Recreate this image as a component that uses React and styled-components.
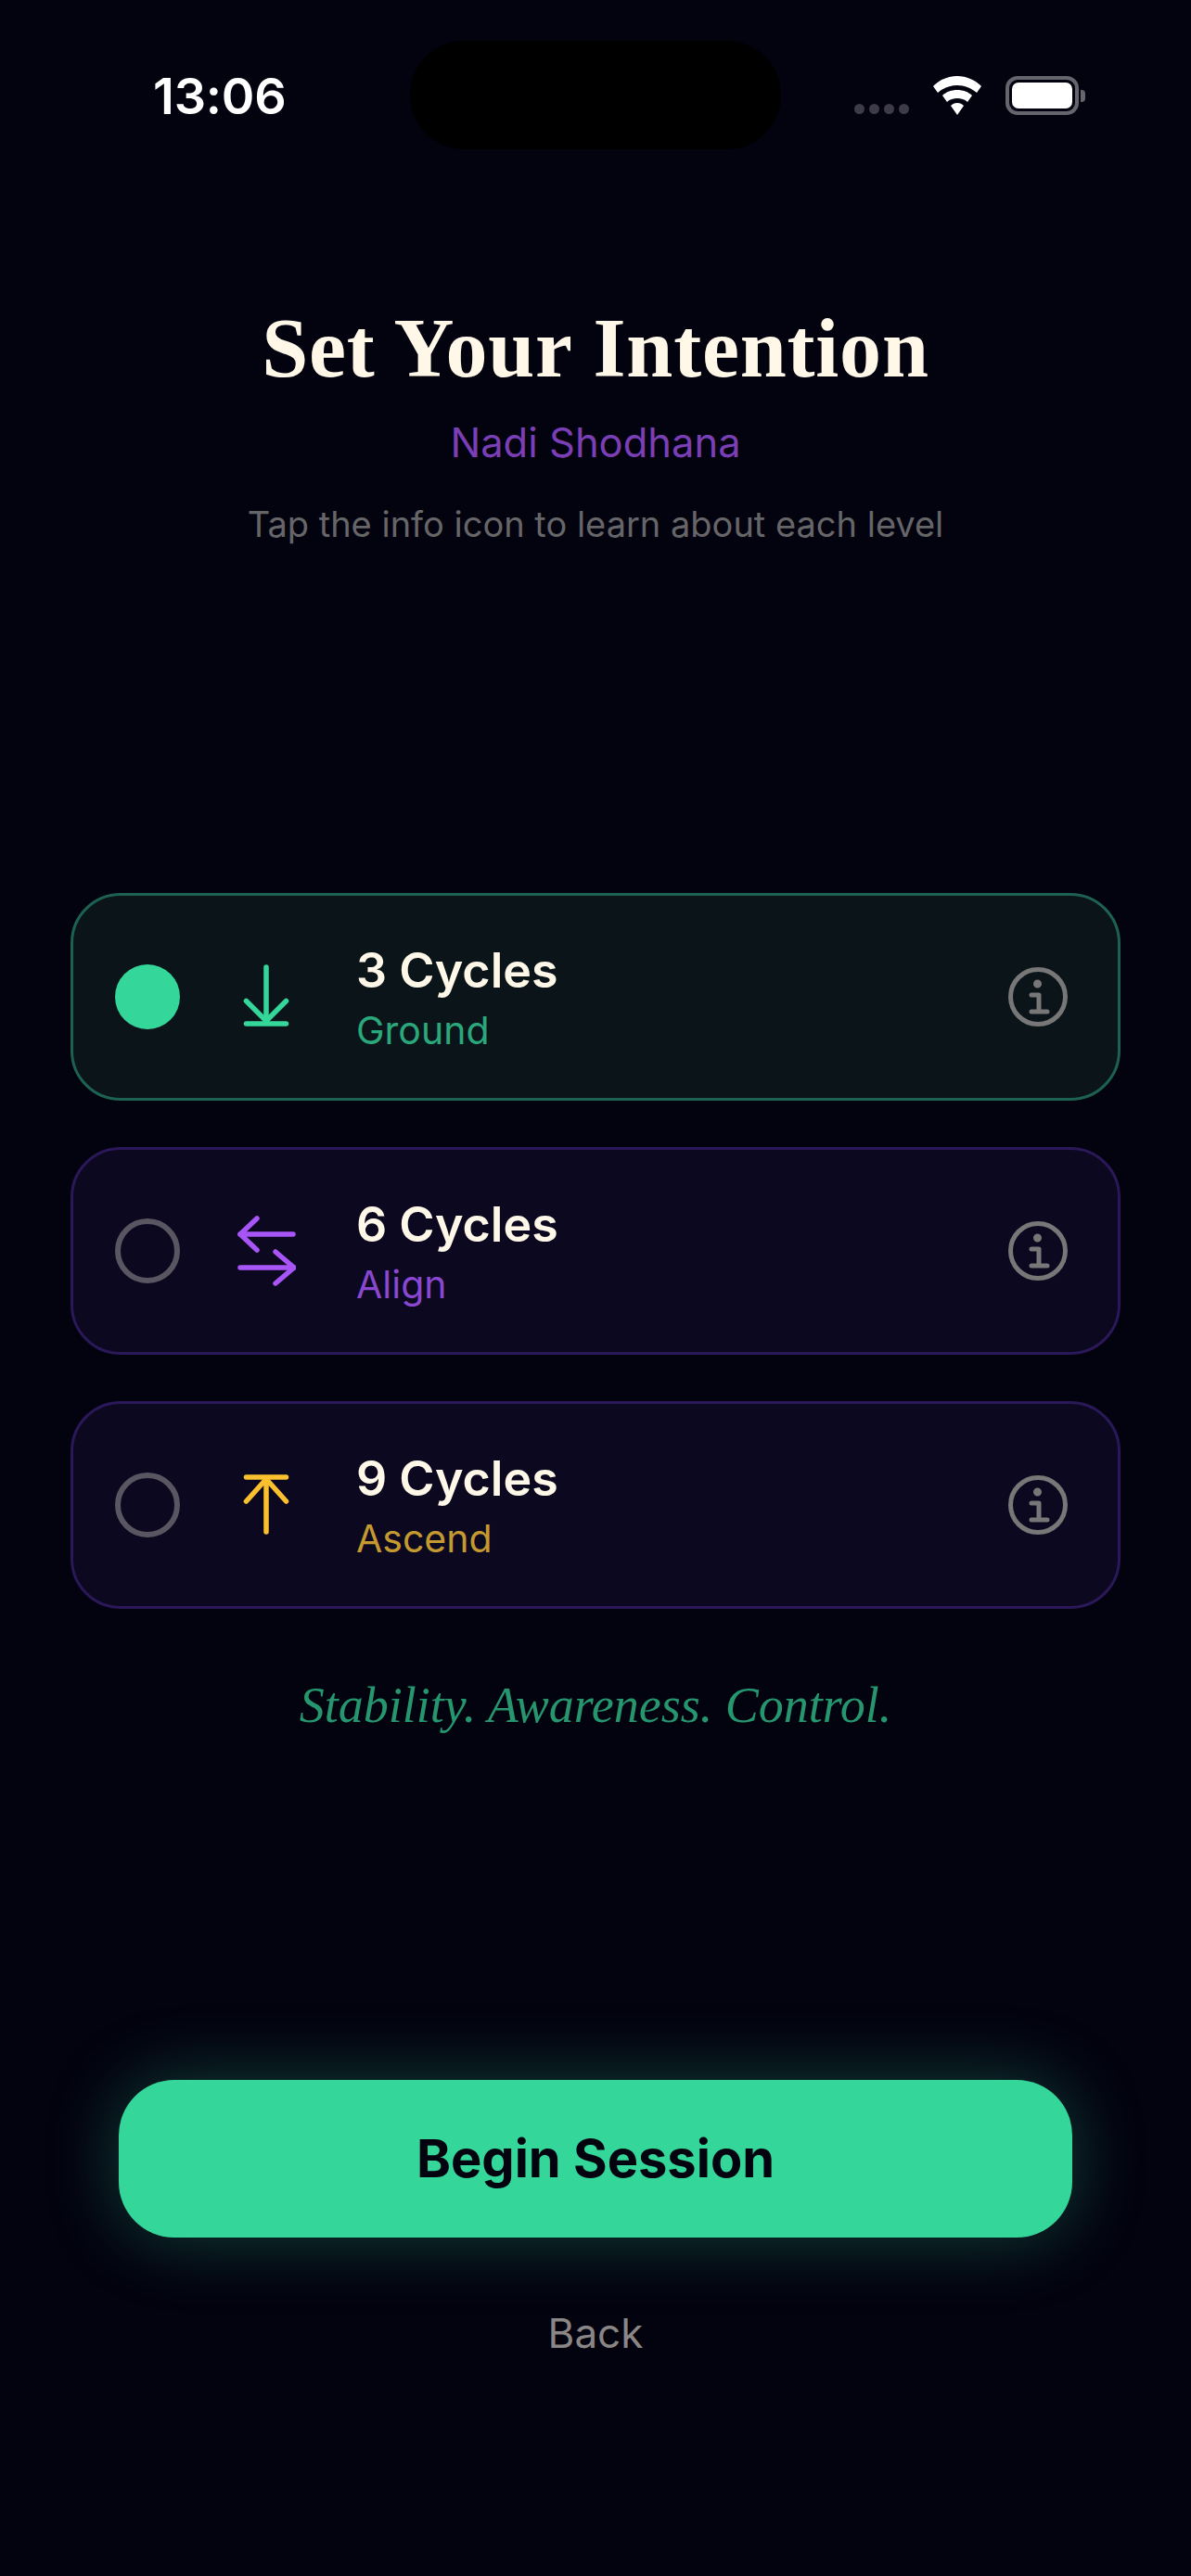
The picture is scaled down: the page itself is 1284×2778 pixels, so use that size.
import React from "react";
import styled, { createGlobalStyle } from "styled-components";

const GlobalStyle = createGlobalStyle`
  html, body {
    margin: 0;
    padding: 0;
    background: #03020f;
  }
  * {
    box-sizing: border-box;
  }
`;

const Page = styled.div`
  width: 1284px;
  height: 2778px;
  overflow: hidden;
  background: #03020f;
  font-family: Inter, "Liberation Sans", sans-serif;
  display: flex;
  flex-direction: column;
`;

const StatusBar = styled.div`
  display: grid;
  grid-template-columns: 442px 400px 442px;
  height: 117px;
  margin-top: 44px;
`;

const Time = styled.div`
  padding: 33px 0 0 165px;
  font-size: 54px;
  line-height: 54px;
  font-weight: 600;
  letter-spacing: -0.2px;
  color: #ffffff;
`;

const Island = styled.div`
  background: #000000;
  border-radius: 58px;
`;

const StatusIcons = styled.div`
  display: flex;
  align-items: flex-start;
  padding: 38px 0 0 79px;
`;

const Dots = styled.div`
  display: flex;
  gap: 5px;
  margin: 30px 25px 0 0;
`;

const Dot = styled.span`
  width: 11px;
  height: 11px;
  border-radius: 50%;
  background: #3c3b47;
`;

const Battery = styled.div`
  display: flex;
  align-items: center;
  margin-left: 25px;
`;

const BatteryBody = styled.div`
  width: 79px;
  height: 42px;
  border: 4px solid #66656e;
  border-radius: 13px;
  padding: 3px;
`;

const BatteryFill = styled.div`
  height: 100%;
  background: #ffffff;
  border-radius: 7px;
`;

const BatteryNub = styled.div`
  width: 5px;
  height: 13px;
  margin-left: 2px;
  border-radius: 0 4px 4px 0;
  background: #66656e;
`;

const Header = styled.div`
  display: flex;
  flex-direction: column;
  align-items: center;
  margin-top: 170px;
`;

const Title = styled.h1`
  margin: 0;
  font-family: "Liberation Serif", serif;
  font-size: 90px;
  line-height: 90px;
  font-weight: 700;
  letter-spacing: 0.8px;
  color: #fff8e8;
`;

const Subtitle = styled.div`
  margin-top: 31px;
  font-size: 43.5px;
  line-height: 50px;
  color: #7b3fb5;
`;

const Hint = styled.div`
  margin-top: 40px;
  font-size: 38px;
  line-height: 46px;
  color: #666568;
`;

const CardList = styled.div`
  display: flex;
  flex-direction: column;
  gap: 50px;
  margin: 375px 76px 0 76px;
`;

const Card = styled.div`
  display: flex;
  align-items: center;
  height: 224px;
  padding: 0 54px 0 45px;
  border: 3px solid ${(p) => (p.$active ? "#1d6152" : "#2b1858")};
  border-radius: 54px;
  background: ${(p) => (p.$active ? "#0a1419" : "#0b0820")};
`;

const Radio = styled.div`
  width: 70px;
  height: 70px;
  flex: none;
  margin-right: 61px;
  border-radius: 50%;
  background: ${(p) => (p.$active ? "#35d69a" : "transparent")};
  border: ${(p) => (p.$active ? "none" : "6px solid #5a5661")};
`;

const LevelIcon = styled.svg`
  width: 64px;
  height: 80px;
  flex: none;
  margin-right: 65px;
  fill: none;
  stroke: ${(p) => p.$color};
  stroke-width: 5.5;
  stroke-linecap: round;
  stroke-linejoin: round;
`;

const CardText = styled.div`
  flex: 1;
  display: flex;
  flex-direction: column;
  padding-top: 2px;
`;

const CardTitle = styled.div`
  font-size: 52px;
  line-height: 60px;
  font-weight: 600;
  color: #fff8e8;
`;

const CardLabel = styled.div`
  margin-top: 10px;
  font-size: 41px;
  line-height: 48px;
  color: ${(p) => p.$color};
`;

const InfoIcon = styled.svg`
  width: 64px;
  height: 64px;
  flex: none;
  fill: none;
  stroke: #777777;
  stroke-width: 5;
  stroke-linecap: round;
  stroke-linejoin: round;
`;

const Quote = styled.div`
  margin-top: 74px;
  text-align: center;
  font-family: "Liberation Serif", serif;
  font-style: italic;
  font-size: 54px;
  line-height: 60px;
  color: #26966f;
`;

const Footer = styled.div`
  display: flex;
  flex-direction: column;
  align-items: center;
  margin-top: 374px;
`;

const BeginButton = styled.button`
  width: 1028px;
  height: 170px;
  border: none;
  border-radius: 60px;
  background: #35d69a;
  box-shadow: 0 0 80px rgba(53, 214, 154, 0.3);
  font-family: inherit;
  font-size: 56px;
  font-weight: 700;
  color: #03020f;
`;

const BackLink = styled.div`
  margin-top: 77px;
  font-size: 44px;
  line-height: 52px;
  color: #8a8685;
`;

const WifiIcon = () => (
  <svg width="54" height="42" viewBox="0 0 54 42" style={{ flex: "none" }}>
    <path d="M27 0C17 0 8 4 1 11l5 7c6-5 13-8 21-8s15 3 21 8l5-7C46 4 37 0 27 0z" fill="#fff" />
    <path d="M27 15c-6 0-12 2-16 6l5 7c3-3 7-4 11-4s8 1 11 4l5-7c-4-4-10-6-16-6z" fill="#fff" />
    <path d="M27 29c-3 0-5 1-7 3l7 10 7-10c-2-2-4-3-7-3z" fill="#fff" />
  </svg>
);

const levels = [
  {
    cycles: "3 Cycles",
    label: "Ground",
    color: "#35d69a",
    labelColor: "#2aa87c",
    active: true,
    paths: ["M32 8V65", "M10.5 44.5L32 66L53.5 44.5", "M10.5 69H53.5"],
  },
  {
    cycles: "6 Cycles",
    label: "Align",
    color: "#a855f7",
    labelColor: "#8a47cf",
    paths: ["M61 22H4", "M22 5L4 22L22 39", "M4 58H62", "M42 41L62 58L42 75"],
  },
  {
    cycles: "9 Cycles",
    label: "Ascend",
    color: "#fbc02d",
    labelColor: "#c49a30",
    paths: ["M10.5 10H53.5", "M32 12V69", "M10.5 36L32 12L53.5 36"],
  },
];

const App = () => {
  return (
    <Page>
      <GlobalStyle />
      <StatusBar>
        <Time>13:06</Time>
        <Island />
        <StatusIcons>
          <Dots>
            <Dot />
            <Dot />
            <Dot />
            <Dot />
          </Dots>
          <WifiIcon />
          <Battery>
            <BatteryBody>
              <BatteryFill />
            </BatteryBody>
            <BatteryNub />
          </Battery>
        </StatusIcons>
      </StatusBar>

      <Header>
        <Title>Set Your Intention</Title>
        <Subtitle>Nadi Shodhana</Subtitle>
        <Hint>Tap the info icon to learn about each level</Hint>
      </Header>

      <CardList>
        {levels.map((level) => (
          <Card key={level.cycles} $active={level.active}>
            <Radio $active={level.active} />
            <LevelIcon viewBox="0 0 64 80" $color={level.color}>
              {level.paths.map((d) => (
                <path key={d} d={d} />
              ))}
            </LevelIcon>
            <CardText>
              <CardTitle>{level.cycles}</CardTitle>
              <CardLabel $color={level.labelColor}>{level.label}</CardLabel>
            </CardText>
            <InfoIcon viewBox="0 0 64 64">
              <circle cx="32" cy="32" r="29.5" />
              <path d="M25 30H33V48M25 48H42" />
              <circle cx="31.5" cy="18" r="2" fill="#777777" />
            </InfoIcon>
          </Card>
        ))}
      </CardList>

      <Quote>Stability. Awareness. Control.</Quote>

      <Footer>
        <BeginButton>Begin Session</BeginButton>
        <BackLink>Back</BackLink>
      </Footer>
    </Page>
  );
};

export default App;
